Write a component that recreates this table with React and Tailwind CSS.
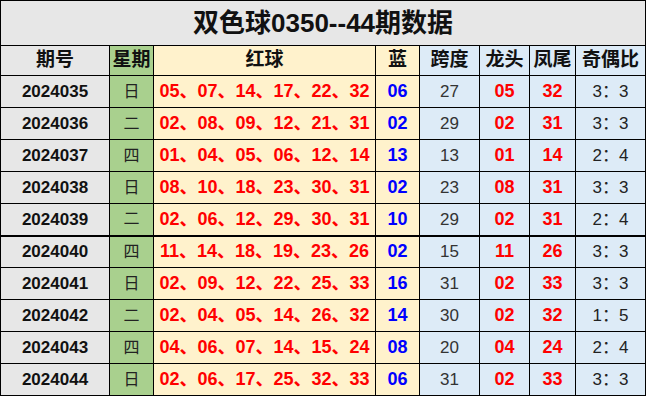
import React from "react";

const rows = [
  ["2024035", "日", "05、07、14、17、22、32", "06", "27", "05", "32", "3：3"],
  ["2024036", "二", "02、08、09、12、21、31", "02", "29", "02", "31", "3：3"],
  ["2024037", "四", "01、04、05、06、12、14", "13", "13", "01", "14", "2：4"],
  ["2024038", "日", "08、10、18、23、30、31", "02", "23", "08", "31", "3：3"],
  ["2024039", "二", "02、06、12、29、30、31", "10", "29", "02", "31", "2：4"],
  ["2024040", "四", "11、14、18、19、23、26", "02", "15", "11", "26", "3：3"],
  ["2024041", "日", "02、09、12、22、25、33", "16", "31", "02", "33", "3：3"],
  ["2024042", "二", "02、04、05、14、26、32", "14", "30", "02", "32", "1：5"],
  ["2024043", "四", "04、06、07、14、15、24", "08", "20", "04", "24", "2：4"],
  ["2024044", "日", "02、06、17、25、32、33", "06", "31", "02", "33", "3：3"],
];

const font = { fontFamily: '"Liberation Sans", "Noto Sans CJK SC", sans-serif' };

export default function App() {
  return (
    <div className="w-[647px] h-[396px] bg-white overflow-hidden" style={font}>
      <table className="border-collapse table-fixed w-[645px]">
        <colgroup>
          <col className="w-[109px]" />
          <col className="w-[44px]" />
          <col className="w-[222px]" />
          <col className="w-[44px]" />
          <col className="w-[60px]" />
          <col className="w-[50px]" />
          <col className="w-[46px]" />
          <col className="w-[70px]" />
        </colgroup>
        <tbody>
          <tr className="h-[45px]">
            <td colSpan={8} className="border border-black bg-[#e7e7e7] text-center text-[26px] font-bold text-[#111] p-0">
              双色球0350--44期数据
            </td>
          </tr>
          <tr className="h-[30px] text-[19px] font-bold text-[#111]">
            <td className="border border-black bg-[#e7e7e7] text-center p-0">期号</td>
            <td className="border border-black bg-[#a9d08e] text-center p-0 whitespace-nowrap">星期</td>
            <td className="border border-black bg-[#fff2cc] text-center p-0">红球</td>
            <td className="border border-black bg-[#fff2cc] text-center p-0">蓝</td>
            <td className="border border-black bg-[#ddebf7] text-center p-0">跨度</td>
            <td className="border border-black bg-[#ddebf7] text-center p-0">龙头</td>
            <td className="border border-black bg-[#ddebf7] text-center p-0">凤尾</td>
            <td className="border border-black bg-[#ddebf7] text-center p-0 whitespace-nowrap">奇偶比</td>
          </tr>
          {rows.map((r, i) => (
            <tr key={r[0]} className={i === 5 ? "h-[32px] border-t-2 border-black" : "h-[32px]"}>
              <td className="border border-black bg-[#e7e7e7] text-center p-0 text-[17px] font-bold text-[#111]">{r[0]}</td>
              <td className="border border-black bg-[#a9d08e] text-center p-0 text-[16px] text-[#222]">{r[1]}</td>
              <td className="border border-black bg-[#fff2cc] text-center p-0 text-[18px] font-bold text-[#ff0000] whitespace-nowrap">{r[2]}</td>
              <td className="border border-black bg-[#fff2cc] text-center p-0 text-[18px] font-bold text-[#0000ff]">{r[3]}</td>
              <td className="border border-black bg-[#ddebf7] text-center p-0 text-[17px] text-[#333]">{r[4]}</td>
              <td className="border border-black bg-[#ddebf7] text-center p-0 text-[18px] font-bold text-[#ff0000]">{r[5]}</td>
              <td className="border border-black bg-[#ddebf7] text-center p-0 text-[18px] font-bold text-[#ff0000]">{r[6]}</td>
              <td className="border border-black bg-[#ddebf7] text-center p-0 text-[17px] text-[#222]">{r[7]}</td>
            </tr>
          ))}
        </tbody>
      </table>
    </div>
  );
}
